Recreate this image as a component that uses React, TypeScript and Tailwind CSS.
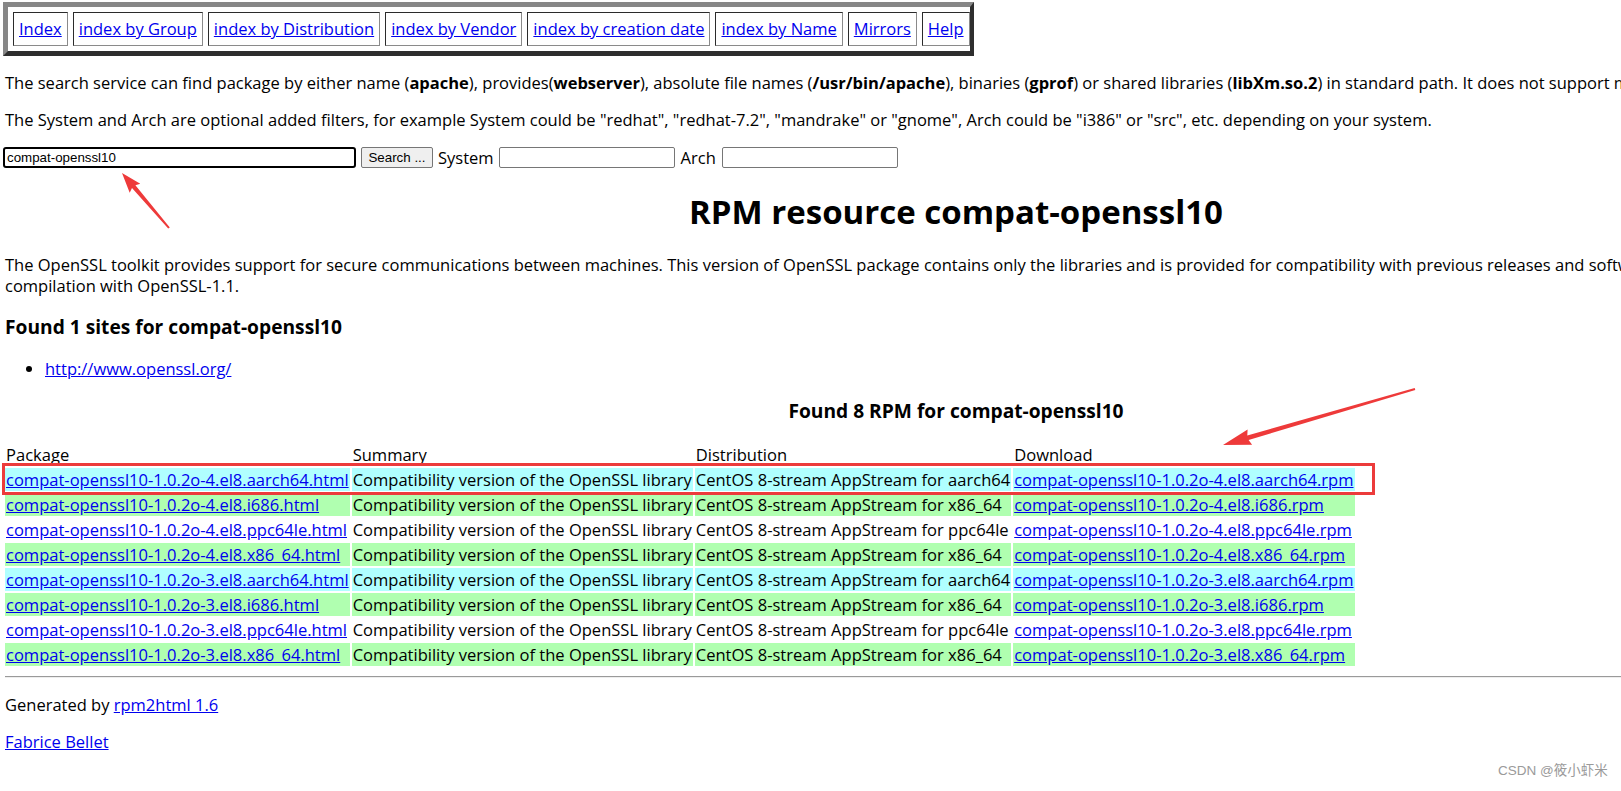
import React from "react";

type Pt = [number, number];

function arrowPoints(tail: Pt, tip: Pt, headLen: number, headHalf: number, t0: number, t1: number): string {
  const dx = tip[0] - tail[0];
  const dy = tip[1] - tail[1];
  const len = Math.hypot(dx, dy);
  const ux = dx / len;
  const uy = dy / len;
  const nx = -uy;
  const ny = ux;
  const bx = tip[0] - ux * headLen;
  const by = tip[1] - uy * headLen;
  const pts: Pt[] = [
    [tail[0] + nx * t0, tail[1] + ny * t0],
    [bx + nx * t1, by + ny * t1],
    [bx + nx * headHalf - ux * 2, by + ny * headHalf - uy * 2],
    [tip[0], tip[1]],
    [bx - nx * headHalf - ux * 2, by - ny * headHalf - uy * 2],
    [bx - nx * t1, by - ny * t1],
    [tail[0] - nx * t0, tail[1] - ny * t0],
  ];
  return pts.map((p) => `${p[0].toFixed(1)},${p[1].toFixed(1)}`).join(" ");
}

const navItems = [
  "Index",
  "index by Group",
  "index by Distribution",
  "index by Vendor",
  "index by creation date",
  "index by Name",
  "Mirrors",
  "Help",
];

type Row = { pkg: string; dist: string; bg: string };

const rows: Row[] = [
  { pkg: "compat-openssl10-1.0.2o-4.el8.aarch64", dist: "aarch64", bg: "bg-[#b0ffff]" },
  { pkg: "compat-openssl10-1.0.2o-4.el8.i686", dist: "x86_64", bg: "bg-[#b0ffb0]" },
  { pkg: "compat-openssl10-1.0.2o-4.el8.ppc64le", dist: "ppc64le", bg: "bg-white" },
  { pkg: "compat-openssl10-1.0.2o-4.el8.x86_64", dist: "x86_64", bg: "bg-[#b0ffb0]" },
  { pkg: "compat-openssl10-1.0.2o-3.el8.aarch64", dist: "aarch64", bg: "bg-[#b0ffff]" },
  { pkg: "compat-openssl10-1.0.2o-3.el8.i686", dist: "x86_64", bg: "bg-[#b0ffb0]" },
  { pkg: "compat-openssl10-1.0.2o-3.el8.ppc64le", dist: "ppc64le", bg: "bg-white" },
  { pkg: "compat-openssl10-1.0.2o-3.el8.x86_64", dist: "x86_64", bg: "bg-[#b0ffb0]" },
];

const link = "text-[#0000ee] underline";

export default function App() {
  return (
    <div className="relative w-[1621px] h-[791px] overflow-hidden bg-white text-black font-['Open_Sans',sans-serif] text-[16.5px] leading-[21px]">
      <div className="ml-[5px] w-[1902px]">
        {/* Navigation table */}
        <div className="mt-[2px] ml-[-2px] inline-flex gap-[5px] py-[5px] pl-[5px] pr-0 border-[5px] border-r-[4px] border-t-[#878787] border-l-[#878787] border-b-[#2e2e2e] border-r-[#2e2e2e]">
          {navItems.map((t) => (
            <div
              key={t}
              className="px-[5px] py-[6px] leading-[20px] text-[16.5px] border border-t-[#2b2b2b] border-l-[#2b2b2b] border-b-[#8a8a8a] border-r-[#8a8a8a]"
            >
              <a className={link}>{t}</a>
            </div>
          ))}
        </div>

        <p className="mt-[16px] whitespace-nowrap">
          The search service can find package by either name (<b>apache</b>), provides(<b>webserver</b>), absolute file names (<b>/usr/bin/apache</b>), binaries (<b>gprof</b>) or shared libraries (<b>libXm.so.2</b>) in standard path. It does not support multiple arguments yet.
        </p>
        <p className="mt-[16px] whitespace-nowrap">
          The System and Arch are optional added filters, for example System could be "redhat", "redhat-7.2", "mandrake" or "gnome", Arch could be "i386" or "src", etc. depending on your system.
        </p>

        {/* Search form */}
        <div className="mt-[16px] flex items-center h-[22px]">
          <div className="ml-[-2px] w-[353px] h-[21px] border-2 border-black rounded-[3px] flex items-center pl-[2px] font-['Liberation_Sans',Arial,sans-serif] text-[13.33px] leading-[15px]">
            compat-openssl10
          </div>
          <div className="ml-[5px] w-[72px] h-[21px] border border-[#767676] rounded-[2px] bg-[#efefef] flex items-center justify-center font-['Liberation_Sans',Arial,sans-serif] text-[13.33px] leading-[15px]">
            Search ...
          </div>
          <span className="ml-[5px]">System</span>
          <div className="ml-[5px] w-[176px] h-[21px] border border-[#767676] rounded-[2px] bg-white" />
          <span className="ml-[6px]">Arch</span>
          <div className="ml-[6px] w-[176px] h-[21px] border border-[#767676] rounded-[2px] bg-white" />
        </div>

        <h1 className="mt-[23px] mb-[21px] text-center text-[33px] font-bold leading-[42px]">
          RPM resource compat-openssl10
        </h1>

        <p>
          The OpenSSL toolkit provides support for secure communications between machines. This version of OpenSSL package contains only the libraries and is provided for compatibility with previous releases and software that does not support
          <br />
          compilation with OpenSSL-1.1.
        </p>

        <h3 className="mt-[18px] mb-[19px] text-[19.2px] font-bold leading-[25px]">Found 1 sites for compat-openssl10</h3>
        <ul className="list-disc pl-[40px]">
          <li>
            <a className={link}>http://www.openssl.org/</a>
          </li>
        </ul>

        <h3 className="mt-[19px] mb-[18px] text-center text-[19.2px] font-bold leading-[25px]">Found 8 RPM for compat-openssl10</h3>

        <table className="ml-[-2px] border-separate border-spacing-[2px] text-[16.55px]">
          <tbody>
            <tr>
              <td className="p-[1px] text-left font-normal">Package</td>
              <td className="p-[1px] text-left font-normal">Summary</td>
              <td className="p-[1px] text-left font-normal">Distribution</td>
              <td className="p-[1px] text-left font-normal">Download</td>
            </tr>
            {rows.map((r) => (
              <tr key={r.pkg}>
                <td className={`p-[1px] whitespace-nowrap ${r.bg}`}>
                  <a className={link}>{r.pkg}.html</a>
                </td>
                <td className={`p-[1px] whitespace-nowrap ${r.bg}`}>Compatibility version of the OpenSSL library</td>
                <td className={`p-[1px] whitespace-nowrap ${r.bg}`}>CentOS 8-stream AppStream for {r.dist}</td>
                <td className={`p-[1px] whitespace-nowrap ${r.bg}`}>
                  <a className={link}>{r.pkg}.rpm</a>
                </td>
              </tr>
            ))}
          </tbody>
        </table>

        <div className="mt-[8px] h-[2px] border-t border-t-[#9a9a9a] border-b border-b-[#eeeeee]" />

        <p className="mt-[16px]">
          Generated by <a className={link}>rpm2html 1.6</a>
        </p>
        <p className="mt-[16px]">
          <a className={link}>Fabrice Bellet</a>
        </p>
      </div>

      {/* Annotations overlay */}
      <div className="absolute left-[2px] top-[463px] w-[1373px] h-[32px] border-[3px] border-[#ec3b3b] pointer-events-none" />
      <svg className="absolute left-0 top-0 pointer-events-none" width="1621" height="791">
        <polygon fill="#ee3a3a" points={arrowPoints([169, 228], [122, 173], 18, 7, 1, 2.2)} />
        <polygon fill="#ee3a3a" points={arrowPoints([1415, 389], [1223, 445], 26, 8, 1, 2.4)} />
      </svg>

      <div className="absolute left-[1498px] top-[762px] whitespace-nowrap text-[13.5px] leading-[18px] text-[#9a9a9a] font-['Liberation_Sans','Noto_Sans_CJK_SC',sans-serif]">
        CSDN @筱小虾米
      </div>
    </div>
  );
}
